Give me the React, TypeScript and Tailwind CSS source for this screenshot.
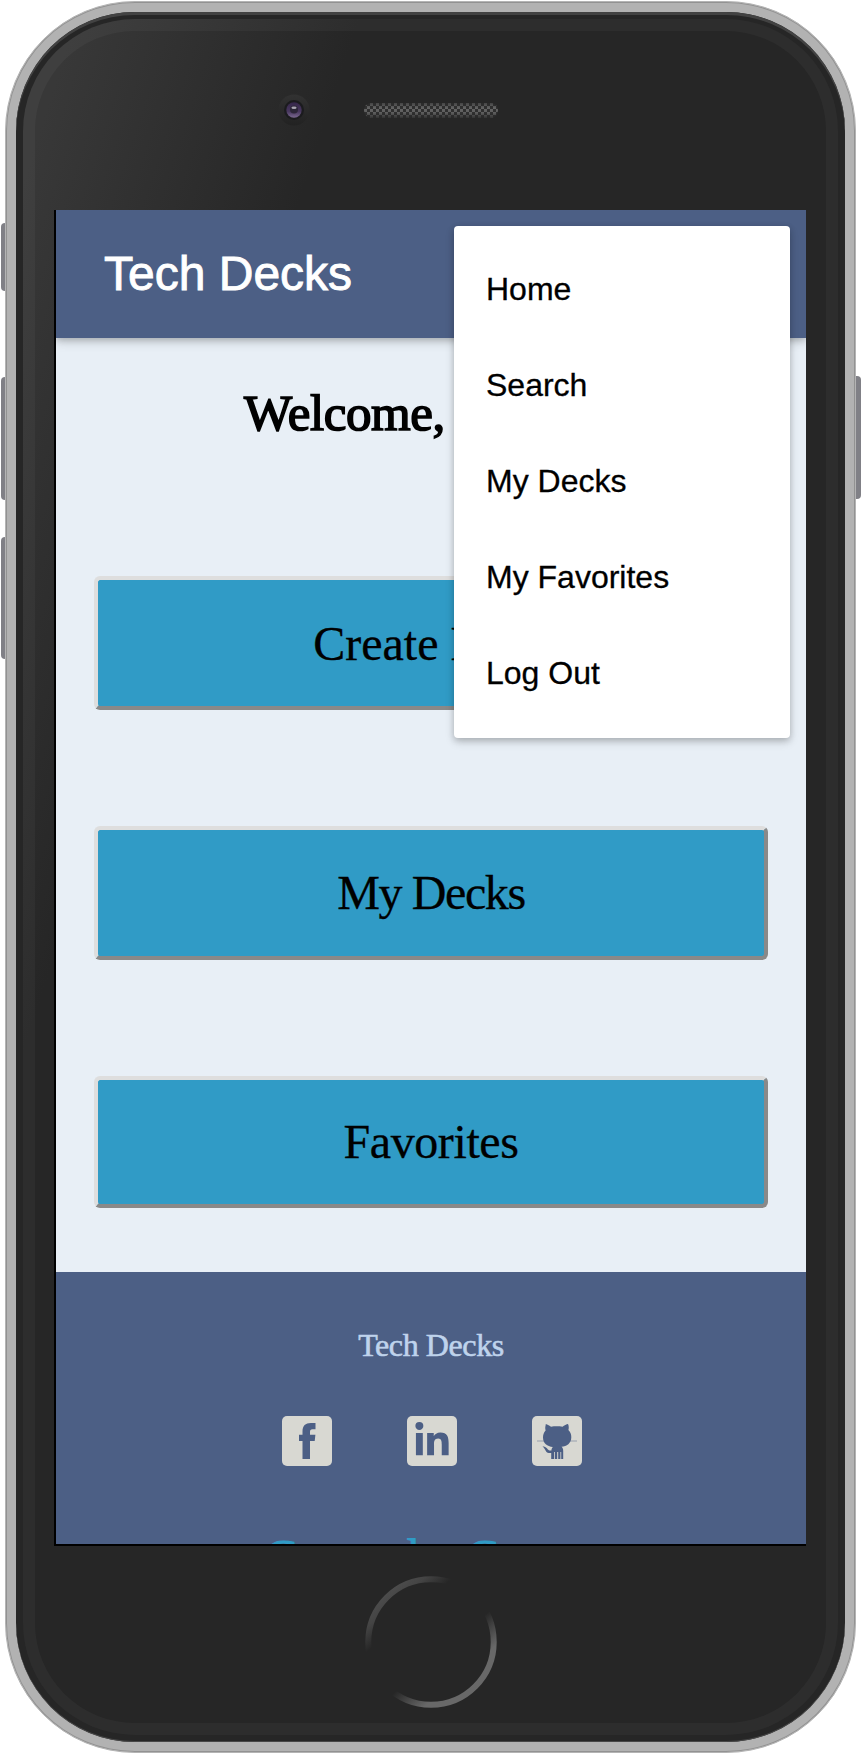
import React from "react";
import { FaLinkedinIn } from "react-icons/fa";

const menuItems = ["Home", "Search", "My Decks", "My Favorites", "Log Out"];

const shadow = "shadow-[0_4px_10px_rgba(0,0,0,0.16),0_2px_6px_rgba(0,0,0,0.16)]";
const serif = "font-['Liberation_Serif',serif]";

function FacebookMark() {
  return (
    <svg viewBox="0 0 50 50" className="h-[50px] w-[50px]" fill="currentColor">
      <path d="M20.500 43V25H17v-6.300h3.500v-3.200c0-5.700 3-8.500 8.300-8.500h4.700v6.200h-3c-2 0-2.500.9-2.500 2.600v2.900h5.400L32.700 25H28v18z" />
    </svg>
  );
}

function Octocat() {
  return (
    <svg viewBox="0 0 50 50" className="h-[50px] w-[50px]" fill="#4c5f85">
      <path d="M13 8c2 .2 4.200 1.400 6 2.800 3.500-.6 8-.6 11.500 0 1.800-1.500 4-2.600 5.500-2.800 1 2 .9 4.500.4 6 2.300 2.300 2.900 4.700 2.900 7.200 0 6.200-4.500 9-9.800 9.500 1.200 1 1.700 2 1.700 4V43h-2v-7h-.8v7h-2.200v-7h-1v7h-2.200v-7h-.8v7h-3v-6c-4.500.6-5-1.500-6.200-3.500-.7-1.200-1.500-2-2.500-3.200 3.300.2 4.200 1.800 5.200 3 1 1.200 2 1.500 3.700 1.200.2-1.700.6-2.600 1.400-3.500-5.500-.6-9.800-3.500-9.800-9.500 0-2.800.8-5.200 2.600-7.100-.6-2-.4-4.200.4-6.400z" />
      <path d="M5 25h9M36 25h9" stroke="#4c5f85" strokeWidth="1.500" strokeOpacity=".3" />
    </svg>
  );
}

function SocialTile({ children }: { children: React.ReactNode }) {
  return (
    <a className="flex h-[50px] w-[50px] items-center justify-center rounded-[5px] bg-[#d8d8d2] text-[#4c5f85]">
      {children}
    </a>
  );
}

function DeckButton({ label, className }: { label: string; className: string }) {
  return (
    <button
      className={`flex w-full items-center justify-center rounded-[6px] border-4 border-t-[#dedede] border-l-[#dedede] border-r-[#898989] border-b-[#898989] bg-[#309bc6] text-[48px] leading-none whitespace-nowrap text-black [-webkit-text-stroke:0.3px_black] ${serif} ${className}`}
    >
      {label}
    </button>
  );
}

function Speaker() {
  return (
    <svg width="134" height="15" viewBox="0 0 134 15">
      <defs>
        <pattern id="mesh" width="6" height="6" patternUnits="userSpaceOnUse">
          <rect width="6" height="6" fill="#303030" />
          <rect width="3" height="3" fill="#646464" />
          <rect x="3" y="3" width="3" height="3" fill="#646464" />
        </pattern>
        <linearGradient id="meshShade" x2="0" y2="1">
          <stop offset="0" stopColor="#262626" stopOpacity=".5" />
          <stop offset=".35" stopColor="#262626" stopOpacity="0" />
          <stop offset=".65" stopColor="#262626" stopOpacity=".1" />
          <stop offset="1" stopColor="#262626" stopOpacity=".8" />
        </linearGradient>
      </defs>
      <rect width="134" height="15" rx="7.500" fill="url(#mesh)" />
      <rect width="134" height="15" rx="7.500" fill="url(#meshShade)" />
    </svg>
  );
}

function Camera() {
  return (
    <svg width="32" height="32" viewBox="0 0 32 32">
      <defs>
        <linearGradient id="rim" x2="0" y2="1">
          <stop offset="0" stopColor="#323232" />
          <stop offset="1" stopColor="#222" />
        </linearGradient>
        <linearGradient id="lens" x2="0" y2="1">
          <stop offset="0" stopColor="#35264a" />
          <stop offset=".6" stopColor="#49385f" />
          <stop offset="1" stopColor="#7a6890" />
        </linearGradient>
      </defs>
      <circle cx="16" cy="16" r="15.500" fill="url(#rim)" />
      <circle cx="16" cy="16" r="10" fill="#1b1b1e" />
      <circle cx="16" cy="16" r="7.700" fill="url(#lens)" />
      <circle cx="16" cy="15.500" r="4" fill="#2c2638" />
      <ellipse cx="16" cy="13.700" rx="2.600" ry="1.300" fill="#aaa5b2" />
    </svg>
  );
}

function HomeRing() {
  return (
    <svg width="132" height="132" viewBox="-66 -66 132 132">
      <defs>
        <linearGradient id="ring" gradientUnits="userSpaceOnUse" x1="-43" y1="-50" x2="43" y2="50">
          <stop offset="0" stopColor="#4c4c4c" />
          <stop offset=".1" stopColor="#444" />
          <stop offset=".24" stopColor="#262626" />
          <stop offset=".61" stopColor="#262626" />
          <stop offset=".84" stopColor="#686868" />
          <stop offset="1" stopColor="#686868" />
        </linearGradient>
      </defs>
      <circle r="62.700" fill="none" stroke="url(#ring)" strokeWidth="6" />
    </svg>
  );
}

export default function App() {
  return (
    <div className="relative h-[1754px] w-[862px] overflow-hidden bg-white font-['Liberation_Sans',sans-serif]">
      <div className="absolute top-[223px] left-[1px] h-[68px] w-[10px] rounded-[4px] bg-[#808086]" />
      <div className="absolute top-[377px] left-[1px] h-[123px] w-[10px] rounded-[4px] bg-[#808086]" />
      <div className="absolute top-[537px] left-[1px] h-[122px] w-[10px] rounded-[4px] bg-[#808086]" />
      <div className="absolute top-[376px] left-[851px] h-[123px] w-[10px] rounded-[4px] bg-[#808086]" />

      <div className="relative mt-px ml-[5px] h-[1752px] w-[851px] rounded-[130px] border border-[#b4b4b4] bg-[#b2b2b2] p-[10px] shadow-[inset_0_0_0_1px_#929292]">
        <div className="h-[1730px] w-[829px] rounded-[119px] bg-[#262626] p-[7px] shadow-[inset_0_3px_0_#424242,inset_0_-1px_0_#484848]">
          <div className="flex h-[1716px] w-[815px] flex-col items-center rounded-[112px] bg-[linear-gradient(108deg,#383838_50px,#262626_320px)] shadow-[inset_0_0_0_12px_rgba(255,255,255,0.035)]">
            <div className="flex h-[191px] w-full items-start pt-[75px] pl-[255px]">
              <Camera />
              <div className="mt-[9px] ml-[54px]">
                <Speaker />
              </div>
            </div>

            <div className="mr-[1px] border-b-2 border-l-2 border-black">
              <div className="relative flex h-[1334px] w-[750px] flex-col overflow-hidden bg-[#e8eff6]">
                <header className={`flex h-[128px] shrink-0 items-center bg-[#4c5f85] pl-[48px] ${shadow}`}>
                  <h1 className="text-[48px] leading-none text-white [-webkit-text-stroke:0.9px_white]">Tech Decks</h1>
                </header>

                <main className="flex h-[934px] shrink-0 flex-col px-[38px] pt-[45px]">
                  <h2 className={`mb-[133px] pl-[150px] text-[51px] leading-[60px] tracking-[-0.4px] text-black [-webkit-text-stroke:1.6px_black] ${serif}`}>
                    Welcome,
                  </h2>
                  <div className="flex w-[674px] flex-col gap-[116px]">
                    <DeckButton label="Create Deck" className="h-[134px] pt-[2px] pl-[3px]" />
                    <DeckButton label="My Decks" className="h-[134px] pb-[1px] tracking-[-1.4px]" />
                    <DeckButton label="Favorites" className="h-[132px] tracking-[-0.4px]" />
                  </div>
                </main>

                <footer className={`flex shrink-0 flex-col items-center bg-[#4c5f85] pt-[53px] ${serif}`}>
                  <p className="text-[32px] leading-[40px] tracking-[-0.4px] text-[#bfd3ec] [-webkit-text-stroke:0.6px_#bfd3ec]">Tech Decks</p>
                  <div className="mt-[51px] mb-[63px] ml-[2px] flex w-[300px] justify-between">
                    <SocialTile>
                      <FacebookMark />
                    </SocialTile>
                    <SocialTile>
                      <FaLinkedinIn className="h-[38px] w-[38px]" />
                    </SocialTile>
                    <SocialTile>
                      <Octocat />
                    </SocialTile>
                  </div>
                  <a className="ml-[10px] text-[48px] leading-[56px] tracking-[0.7px] whitespace-nowrap text-[#309bc6] [-webkit-text-stroke:1px_#309bc6]">Created a Course</a>
                </footer>

                <nav className={`absolute top-[16px] right-[16px] w-[336px] rounded-[4px] bg-white py-[16px] ${shadow}`}>
                  {menuItems.map((item) => (
                    <a key={item} className="flex h-[96px] items-center pb-[2px] pl-[32px] text-[32px] leading-none text-black [-webkit-text-stroke:0.3px_black]">
                      {item}
                    </a>
                  ))}
                </nav>
              </div>
            </div>

            <div className="mt-[30px]">
              <HomeRing />
            </div>
          </div>
        </div>
      </div>
    </div>
  );
}
